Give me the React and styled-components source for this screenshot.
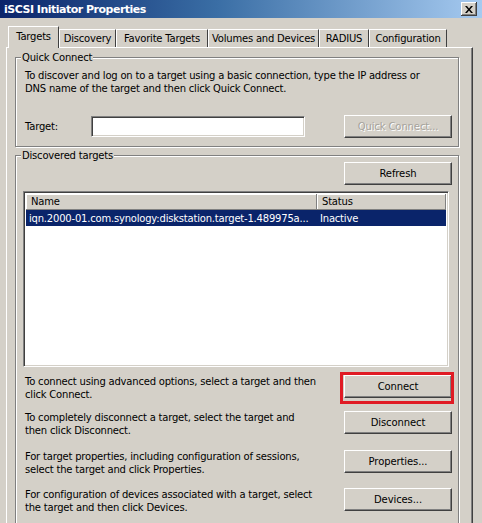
import React from "react"
import styled, { createGlobalStyle, css } from "styled-components"

const GlobalStyle = createGlobalStyle`
  body {
    margin: 0;
    background: #d4d0c8;
    font-family: Tahoma, "DejaVu Sans", sans-serif;
    font-size: 10px;
    letter-spacing: -0.2px;
    color: #000;
  }
`

const tabs = [
  { label: "Targets", width: 51, active: true },
  { label: "Discovery", width: 57 },
  { label: "Favorite Targets", width: 92 },
  { label: "Volumes and Devices", width: 111 },
  { label: "RADIUS", width: 50 },
  { label: "Configuration", width: 78 },
]

const actions = [
  {
    lines: ["To connect using advanced options, select a target and then", "click Connect."],
    button: "Connect",
    highlight: true,
    height: 36,
  },
  {
    lines: ["To completely disconnect a target, select the target and", "then click Disconnect."],
    button: "Disconnect",
    height: 39,
  },
  {
    lines: ["For target properties, including configuration of sessions,", "select the target and click Properties."],
    button: "Properties...",
    height: 38,
  },
  {
    lines: ["For configuration of devices associated with a target, select", "the target and then click Devices."],
    button: "Devices...",
    height: 38,
  },
]

function App() {
  return (
    <>
      <GlobalStyle />
      <Window>
        <TitleBar>
          <span>iSCSI Initiator Properties</span>
          <CloseButton>
            <svg width="8" height="7" viewBox="0 0 8 7">
              <path d="M0 0h2l2 2.5L6 0h2L5 3.5 8 7H6L4 4.5 2 7H0l3-3.5z" fill="#000" />
            </svg>
          </CloseButton>
        </TitleBar>

        <TabStrip>
          {tabs.map((t) => (
            <Tab key={t.label} $active={t.active} $width={t.width}>
              {t.label}
            </Tab>
          ))}
        </TabStrip>

        <Panel>
          <GroupBox>
            <Legend>Quick Connect</Legend>
            <Description>
              To discover and log on to a target using a basic connection, type the IP address or
              <br />
              DNS name of the target and then click Quick Connect.
            </Description>
            <TargetRow>
              <Label>Target:</Label>
              <TextInput />
              <Button disabled>Quick Connect...</Button>
            </TargetRow>
          </GroupBox>

          <GroupBox $grow>
            <Legend>Discovered targets</Legend>
            <RefreshRow>
              <Button>Refresh</Button>
            </RefreshRow>
            <ListView>
              <HeaderRow>
                <HeaderCell $width={291}>Name</HeaderCell>
                <HeaderCell $fill>Status</HeaderCell>
              </HeaderRow>
              <ItemRow $selected>
                <Cell $width={291}>iqn.2000-01.com.synology:diskstation.target-1.489975a...</Cell>
                <Cell>Inactive</Cell>
              </ItemRow>
            </ListView>

            <Actions>
              {actions.map((a) => (
                <ActionRow key={a.button} $height={a.height}>
                  <ActionText>
                    {a.lines[0]}
                    <br />
                    {a.lines[1]}
                  </ActionText>
                  <Button $highlight={a.highlight}>{a.button}</Button>
                </ActionRow>
              ))}
            </Actions>
          </GroupBox>
        </Panel>
      </Window>
    </>
  )
}

const Window = styled.div`
  width: 482px;
  height: 523px;
  overflow: hidden;
  display: flex;
  flex-direction: column;
  background: #d4d0c8;
`

const TitleBar = styled.div`
  height: 18px;
  flex: none;
  display: flex;
  align-items: center;
  justify-content: space-between;
  padding: 0 5px 0 4px;
  background: linear-gradient(to right, #0a246a 0%, #3a6ea5 45%, #a6caf0 100%);
  color: #fff;
  font-weight: bold;
  font-size: 11px;
  letter-spacing: -0.5px;
`

const CloseButton = styled.div`
  width: 16px;
  height: 14px;
  display: flex;
  align-items: center;
  justify-content: center;
  background: #d4d0c8;
  box-shadow: inset -1px -1px 0 #404040, inset 1px 1px 0 #fff, inset -2px -2px 0 #808080;
`

const TabStrip = styled.div`
  display: flex;
  align-items: flex-end;
  height: 22px;
  margin-top: 7px;
  padding-left: 8px;
  flex: none;
`

const Tab = styled.div`
  width: ${(p) => p.$width}px;
  height: 18px;
  display: flex;
  align-items: center;
  justify-content: center;
  padding-bottom: 1px;
  box-sizing: border-box;
  border-left: 1px solid #fff;
  border-top: 1px solid #fff;
  border-right: 1px solid #404040;
  white-space: nowrap;
  ${(p) =>
    p.$active &&
    css`
      height: 22px;
      margin-bottom: -1px;
      background: #d4d0c8;
      position: relative;
      z-index: 1;
      padding-bottom: 3px;
    `}
`

const Panel = styled.div`
  flex: 1;
  margin-left: 6px;
  width: 467px;
  box-sizing: border-box;
  border-left: 1px solid #fff;
  border-top: 1px solid #fff;
  border-right: 1px solid #404040;
  box-shadow: inset -1px 0 0 #808080;
  padding: 3px 0 0 8px;
  display: flex;
  flex-direction: column;
`

const GroupBox = styled.fieldset`
  width: 444px;
  box-sizing: border-box;
  margin: 0 0 2px 0;
  padding: 5px 6px 8px 9px;
  border: 1px solid #808080;
  box-shadow: 1px 1px 0 #fff, inset 1px 1px 0 #fff;
  min-width: 0;
  ${(p) =>
    p.$grow &&
    css`
      flex: 1;
    `}
`

const Legend = styled.legend`
  padding: 0 1px;
  margin-left: -4px;
  line-height: 13px;
  background: #d4d0c8;
`

const Description = styled.p`
  margin: 0;
  line-height: 13px;
  white-space: nowrap;
`

const TargetRow = styled.div`
  display: flex;
  align-items: center;
  margin-top: 20px;
`

const Label = styled.span`
  width: 66px;
`

const TextInput = styled.input`
  width: 214px;
  height: 21px;
  box-sizing: border-box;
  margin: 0 39px 0 0;
  padding: 0 3px;
  border: 1px solid;
  border-color: #808080 #fff #fff #808080;
  box-shadow: inset 1px 1px 0 #404040, inset -1px -1px 0 #d4d0c8;
  background: #fff;
  font: inherit;
  outline: none;
`

const Button = styled.button`
  width: 108px;
  height: 23px;
  flex: none;
  margin-left: auto;
  box-sizing: border-box;
  padding: 0;
  border: 1px solid;
  border-color: #fff #404040 #404040 #fff;
  box-shadow: inset -1px -1px 0 #808080;
  background: #d4d0c8;
  color: #000;
  font: inherit;
  letter-spacing: -0.1px;
  position: relative;

  &:disabled {
    color: #a6a39c;
    text-shadow: 1px 1px 0 #fff;
  }

  ${(p) =>
    p.$highlight &&
    css`
      &::after {
        content: "";
        position: absolute;
        top: -4px;
        left: -5px;
        right: -3px;
        bottom: -7px;
        border: 3px solid #e01b24;
      }
    `}
`

const RefreshRow = styled.div`
  display: flex;
  justify-content: flex-end;
  margin-top: -5px;
`

const ListView = styled.div`
  margin: 6px 0 0 -2px;
  width: 426px;
  height: 176px;
  box-sizing: border-box;
  border: 1px solid;
  border-color: #808080 #fff #fff #808080;
  box-shadow: inset 1px 1px 0 #404040, inset -1px -1px 0 #d4d0c8;
  background: #fff;
  padding: 2px;
`

const HeaderRow = styled.div`
  display: flex;
  height: 16px;
`

const HeaderCell = styled.div`
  ${(p) => (p.$fill ? "flex: 1;" : `width: ${p.$width}px;`)}
  box-sizing: border-box;
  background: #d4d0c8;
  padding-left: 5px;
  line-height: 15px;
  border-right: 1px solid #808080;
  border-bottom: 1px solid #808080;
  box-shadow: inset 1px 1px 0 #fff;
`

const ItemRow = styled.div`
  display: flex;
  height: 16px;
  align-items: center;
  ${(p) =>
    p.$selected &&
    css`
      background: #0a246a;
      color: #fff;
    `}
`

const Cell = styled.div`
  ${(p) => (p.$width ? `width: ${p.$width}px;` : "flex: 1;")}
  box-sizing: border-box;
  padding-left: 3px;
  white-space: nowrap;
  overflow: hidden;
`

const Actions = styled.div`
  display: flex;
  flex-direction: column;
  margin-top: 8px;
`

const ActionRow = styled.div`
  display: flex;
  align-items: flex-start;
  height: ${(p) => p.$height}px;
`

const ActionText = styled.p`
  margin: 0;
  line-height: 13px;
  white-space: nowrap;
`

export default App
